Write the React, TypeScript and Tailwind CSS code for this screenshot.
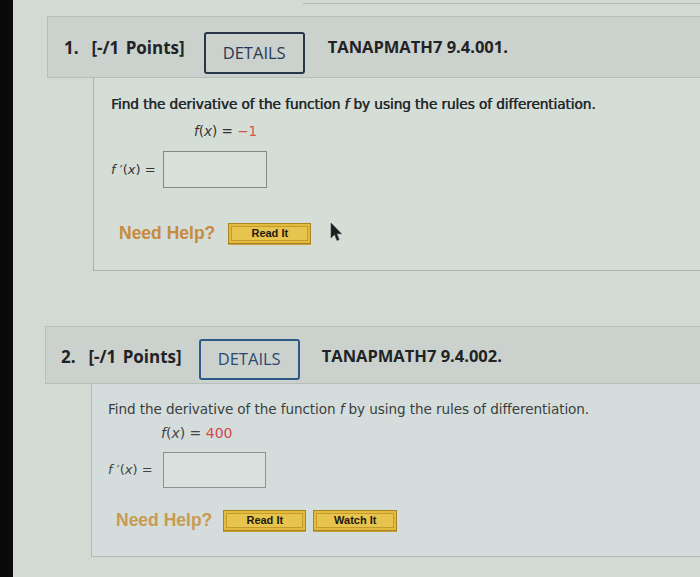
import React from "react";

const openSans = { fontFamily: '"Open Sans", "Liberation Sans", sans-serif' };
const verdana = { fontFamily: '"DejaVu Sans", Verdana, sans-serif' };
const arial = { fontFamily: '"Liberation Sans", Arial, sans-serif' };

function Cursor() {
  return (
    <svg width="14" height="20" viewBox="0 0 14 20" className="ml-[18px] -mt-[1px]">
      <path d="M2 1 L2 16 L5.5 12.5 L8 18.5 L10.2 17.6 L7.8 11.8 L12.5 11.8 Z" fill="#1c1f22" stroke="#3a3f44" strokeWidth="0.6" />
    </svg>
  );
}

function HelpButton({ label, w }: { label: string; w: string }) {
  return (
    <div className={`${w} h-[21px] bg-[#e3bb3f] border border-[#a98320] p-[2px] shadow-[0_1px_0_#c9a040]`}>
      <div
        className="h-full w-full border border-[#c69a2a] bg-[#e6c44e] flex items-center justify-center text-[11px] font-bold text-[#1e1a10]"
        style={arial}
      >
        {label}
      </div>
    </div>
  );
}

export default function App() {
  return (
    <div className="flex w-[700px] h-[577px] overflow-hidden bg-[#d3dad4]">
      <div className="w-[13px] shrink-0 bg-[#0a0a0c]" />
      <div className="flex-1 flex flex-col pt-[3px]">
        <div className="h-px ml-[290px] bg-[#b4bbb5]" />

        {/* Question 1 */}
        <div className="mt-[12px] ml-[34px] h-[62px] bg-[#cbd1cc] border border-r-0 border-[#b7beb8] flex items-start pt-[15px] pl-[16px]">
          <div className="mt-[3px] text-[17px] font-bold text-[#1f2326] [word-spacing:2px]" style={openSans}>
            1.&nbsp; [-/1 Points]
          </div>
          <div
            className="ml-[19px] w-[101px] h-[42px] border-2 border-[#27344a] rounded-[3px] flex items-center justify-center text-[16.5px] text-[#2a3854]"
            style={openSans}
          >
            DETAILS
          </div>
          <div className="ml-[23px] mt-[3px] text-[16.5px] font-bold text-[#1f2326]" style={openSans}>
            TANAPMATH7 9.4.001.
          </div>
        </div>
        <div className="ml-[80px] h-[193px] border-l border-b border-[#aab2ac] bg-[#d5ddd7] flex flex-col pl-[17px] pt-[16px]">
          <div
            className="text-[13.7px] leading-[21px] text-[#25292b] tracking-[-0.1px] [text-shadow:0.5px_0_0_#25292b]"
            style={verdana}
          >
            Find the derivative of the function <i>f</i> by using the rules of differentiation.
          </div>
          <div className="ml-[83px] mt-[6px] text-[13.5px] leading-[20px] text-[#333]" style={verdana}>
            <i>f</i>(<i>x</i>) = <span className="text-[#d4584a]">−1</span>
          </div>
          <div className="mt-[10px] flex items-center">
            <div className="text-[13px] text-[#333] w-[52px]" style={verdana}>
              <i>f</i> ′(<i>x</i>) =
            </div>
            <div className="w-[104px] h-[37px] border border-[#7f8a82] bg-[#d8e0da]" />
          </div>
          <div className="mt-[35px] ml-[8px] flex items-start">
            <div className="text-[17.5px] font-bold text-[#c78a3e] leading-[21px]" style={arial}>
              Need Help?
            </div>
            <div className="ml-[13px]">
              <HelpButton label="Read It" w="w-[83px]" />
            </div>
            <Cursor />
          </div>
        </div>

        {/* Question 2 */}
        <div className="mt-[55px] ml-[32px] h-[58px] bg-[#cbd1cc] border border-r-0 border-[#b7beb8] flex items-start pt-[12px] pl-[15px]">
          <div className="mt-[5px] text-[17px] font-bold text-[#1f2326] [word-spacing:2px]" style={openSans}>
            2.&nbsp; [-/1 Points]
          </div>
          <div
            className="ml-[17px] w-[101px] h-[41px] border-2 border-[#2f5a86] rounded-[3px] flex items-center justify-center text-[16.5px] text-[#2a4a72]"
            style={openSans}
          >
            DETAILS
          </div>
          <div className="ml-[22px] mt-[5px] text-[16.5px] font-bold text-[#1f2326]" style={openSans}>
            TANAPMATH7 9.4.002.
          </div>
        </div>
        <div className="ml-[78px] h-[173px] border-l border-b border-[#b3bbb5] bg-[#d4dddb] flex flex-col pl-[16px] pt-[15px]">
          <div className="text-[13.6px] leading-[21px] text-[#3a3e40] tracking-[-0.1px]" style={verdana}>
            Find the derivative of the function <i>f</i> by using the rules of differentiation.
          </div>
          <div className="ml-[53px] mt-[3px] text-[14px] leading-[21px] text-[#444]" style={verdana}>
            <i>f</i>(<i>x</i>) = <span className="text-[#d24848]">400</span>
          </div>
          <div className="mt-[8px] flex items-center">
            <div className="text-[13px] text-[#444] w-[55px]" style={verdana}>
              <i>f</i> ′(<i>x</i>) =
            </div>
            <div className="w-[103px] h-[36px] border border-[#8a958d] bg-[#d9e1df]" />
          </div>
          <div className="mt-[22px] ml-[8px] flex items-start">
            <div className="text-[17.5px] font-bold text-[#c99a52] leading-[21px]" style={arial}>
              Need Help?
            </div>
            <div className="ml-[11px]">
              <HelpButton label="Read It" w="w-[83px]" />
            </div>
            <div className="ml-[7px]">
              <HelpButton label="Watch It" w="w-[84px]" />
            </div>
          </div>
        </div>
      </div>
    </div>
  );
}
